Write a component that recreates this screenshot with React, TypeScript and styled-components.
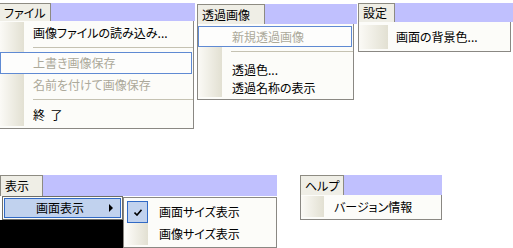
import styled, { createGlobalStyle } from "styled-components";

const GlobalStyle = createGlobalStyle`
  html, body {
    margin: 0;
    padding: 0;
    background: #ffffff;
  }
  body {
    font-family: "Noto Sans CJK JP", "Noto Sans", sans-serif;
    font-size: 12px;
    font-feature-settings: "palt";
    color: #000;
  }
`;

const gutter = (w: number) =>
  `linear-gradient(to right, #fbfaf6 0, #e2e0d2 ${w}px, transparent ${w}px)`;

const Canvas = styled.div`
  position: relative;
  width: 513px;
  height: 248px;
  overflow: hidden;
  background: #ffffff;
`;

// each menu is a separate cropped screenshot placed on the canvas
const Shot = styled.div<{ $left: number; $top: number; $width: number }>`
  position: absolute;
  left: ${(p) => p.$left}px;
  top: ${(p) => p.$top}px;
  width: ${(p) => p.$width}px;
  display: flex;
  flex-direction: column;
`;

const MenuBar = styled.div<{ $height: number }>`
  display: flex;
  height: ${(p) => p.$height}px;
  background: #c0c0fe;
`;

const Tab = styled.div<{ $width: number; $boxed?: boolean }>`
  box-sizing: border-box;
  width: ${(p) => p.$width}px;
  height: 100%;
  display: flex;
  align-items: center;
  padding-left: 4px;
  background: #efeee6;
  border: 1px solid #8d8b82;
  border-left: ${(p) => (p.$boxed ? "1px solid #8d8b82" : "none")};
  border-bottom: none;
  line-height: 1;
  white-space: nowrap;
`;

const Dropdown = styled.div<{ $width: number; $left?: boolean; $pad?: number }>`
  box-sizing: border-box;
  width: ${(p) => p.$width}px;
  background: #fcfcf9;
  border: 1px solid #8a8883;
  border-top: none;
  border-left: ${(p) => (p.$left ? "1px solid #8a8883" : "none")};
  padding: ${(p) => p.$pad ?? 2}px 0 2px;
  display: flex;
  flex-direction: column;
`;

const Item = styled.div<{
  $h: number;
  $gutter: number;
  $text: number;
  $disabled?: boolean;
  $outlined?: boolean;
}>`
  box-sizing: border-box;
  height: ${(p) => p.$h}px;
  display: flex;
  align-items: center;
  padding-left: ${(p) => p.$text}px;
  color: ${(p) => (p.$disabled ? "#aca99a" : "#000")};
  line-height: 1;
  white-space: nowrap;
  background: ${(p) => (p.$outlined ? "#fdfdfc" : gutter(p.$gutter))};
  border: ${(p) => (p.$outlined ? "1px solid #5f8ad3" : "none")};
  margin-right: ${(p) => (p.$outlined ? 1 : 0)}px;
`;

const Separator = styled.div<{ $gutter: number; $text: number; $above: number; $below: number }>`
  box-sizing: border-box;
  height: ${(p) => p.$above + p.$below + 1}px;
  padding-top: ${(p) => p.$above}px;
  background: ${(p) => gutter(p.$gutter)};
  &::after {
    content: "";
    display: block;
    height: 1px;
    margin-left: ${(p) => p.$text}px;
    background: #c5c2b2;
  }
`;

const ViewRow = styled.div`
  display: flex;
  align-items: flex-start;
`;

const ParentMenu = styled.div`
  display: flex;
  flex-direction: column;
  width: 123px;
`;

const ParentItem = styled.div`
  box-sizing: border-box;
  height: 24px;
  margin-left: 2px;
  border: 1px solid #6e6d68;
  background: #fcfcf9;
  padding: 1px;
  display: flex;
`;

const ParentHighlight = styled.div`
  flex: 1;
  display: flex;
  align-items: center;
  justify-content: space-between;
  padding: 0 7px 0 31px;
  background: #c1d2ee;
  border: 1px solid #316ac5;
  line-height: 1;
`;

const Arrow = styled.span`
  width: 0;
  height: 0;
  border-top: 4px solid transparent;
  border-bottom: 4px solid transparent;
  border-left: 4px solid #000;
`;

const BlackArea = styled.div`
  height: 28px;
  background: #000;
`;

const SubMenu = styled.div`
  box-sizing: border-box;
  width: 154px;
  margin-top: 1px;
  background: #fcfcf9;
  border: 1px solid #8a8883;
  padding: 3px 0 2px 3px;
  display: flex;
  flex-direction: column;
`;

const SubItem = styled.div`
  display: flex;
  align-items: center;
  height: 22px;
  line-height: 1;
  white-space: nowrap;
`;

const CheckCell = styled.div<{ $checked?: boolean }>`
  box-sizing: border-box;
  width: 21px;
  height: 100%;
  margin-right: 11px;
  display: flex;
  align-items: center;
  justify-content: center;
  background: ${(p) => (p.$checked ? "#c1d2ee" : gutter(21))};
  border: ${(p) => (p.$checked ? "1px solid #316ac5" : "none")};
`;

const CheckMark = () => (
  <svg width="8" height="7" viewBox="0 0 8 7">
    <path d="M0.5 3.5 L3 6 L7.5 0.8" fill="none" stroke="#000" strokeWidth="1.6" />
  </svg>
);

export default function App() {
  return (
    <Canvas>
      <GlobalStyle />

      <Shot $left={0} $top={3} $width={195}>
        <MenuBar $height={18}>
          <Tab $width={51}>ファイル</Tab>
        </MenuBar>
        <Dropdown $width={194} $pad={1}>
          <Item $h={22} $gutter={24} $text={33}>
            画像ファイルの読み込み...
          </Item>
          <Separator $gutter={24} $text={33} $above={3} $below={4} />
          <Item $h={22} $gutter={24} $text={32} $disabled $outlined>
            上書き画像保存
          </Item>
          <Item $h={22} $gutter={24} $text={33} $disabled>
            名前を付けて画像保存
          </Item>
          <Separator $gutter={24} $text={33} $above={3} $below={4} />
          <Item $h={22} $gutter={24} $text={33}>
            終&nbsp;&nbsp;了
          </Item>
        </Dropdown>
      </Shot>

      <Shot $left={197} $top={4} $width={160}>
        <MenuBar $height={20}>
          <Tab $width={68} $boxed>
            透過画像
          </Tab>
        </MenuBar>
        <Dropdown $width={157} $left $pad={2}>
          <Item $h={21} $gutter={24} $text={33} $disabled $outlined>
            新規透過画像
          </Item>
          <Separator $gutter={24} $text={33} $above={4} $below={9} />
          <Item $h={18} $gutter={24} $text={34}>
            透過色...
          </Item>
          <Item $h={18} $gutter={24} $text={34}>
            透過名称の表示
          </Item>
        </Dropdown>
      </Shot>

      <Shot $left={358} $top={3} $width={155}>
        <MenuBar $height={19}>
          <Tab $width={37} $boxed>
            設定
          </Tab>
        </MenuBar>
        <Dropdown $width={153} $left $pad={3}>
          <Item $h={24} $gutter={29} $text={37}>
            画面の背景色...
          </Item>
        </Dropdown>
      </Shot>

      <Shot $left={0} $top={175} $width={277}>
        <MenuBar $height={21}>
          <Tab $width={43} $boxed>
            表示
          </Tab>
        </MenuBar>
        <ViewRow>
          <ParentMenu>
            <ParentItem>
              <ParentHighlight>
                画面表示
                <Arrow />
              </ParentHighlight>
            </ParentItem>
            <BlackArea />
          </ParentMenu>
          <SubMenu>
            <SubItem>
              <CheckCell $checked>
                <CheckMark />
              </CheckCell>
              画面サイズ表示
            </SubItem>
            <SubItem>
              <CheckCell />
              画像サイズ表示
            </SubItem>
          </SubMenu>
        </ViewRow>
      </Shot>

      <Shot $left={300} $top={175} $width={142}>
        <MenuBar $height={20}>
          <Tab $width={44} $boxed>
            ヘルプ
          </Tab>
        </MenuBar>
        <Dropdown $width={142} $left $pad={1}>
          <Item $h={21} $gutter={23} $text={33}>
            バージョン情報
          </Item>
        </Dropdown>
      </Shot>
    </Canvas>
  );
}
